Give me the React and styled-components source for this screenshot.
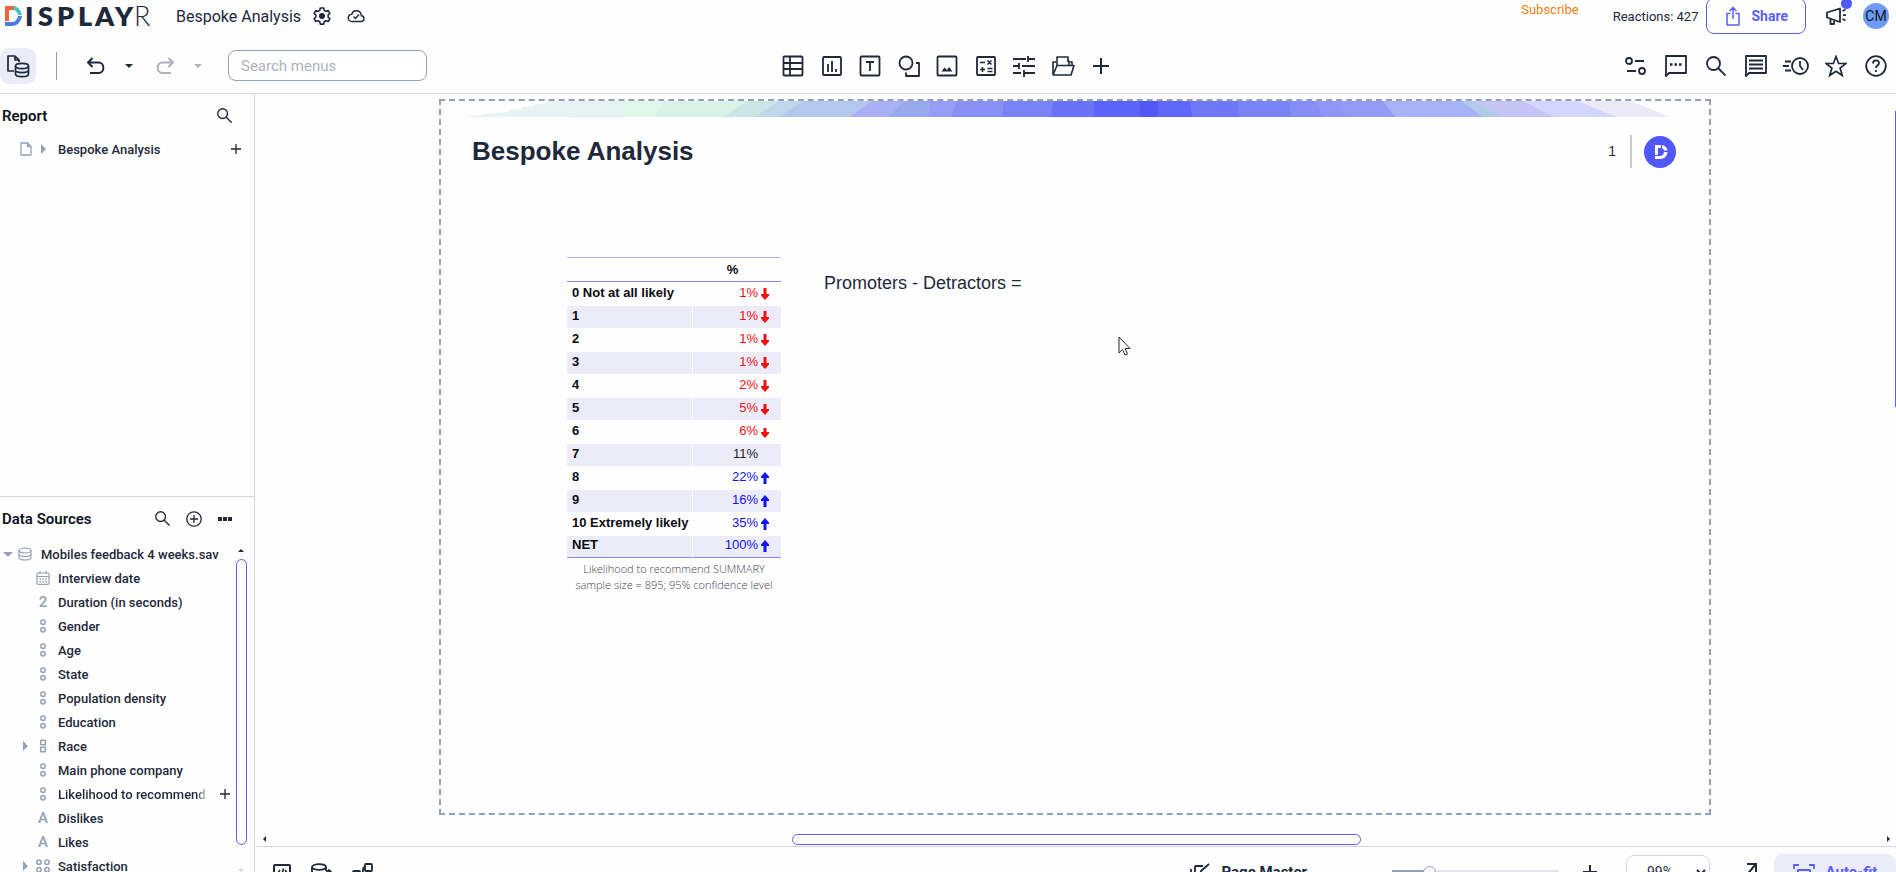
import React from 'react';
import styled, { createGlobalStyle, css } from 'styled-components';

const ink = '#1e293b';
const slate = '#94a0b8';
const line = '#d3d7e2';
const violet = '#5a5ff5';
const lilac = '#ecebf8';
const uiFont = 'Roboto, "Open Sans", sans-serif';
const slideFont = '"Liberation Sans", Arial, sans-serif';

const GlobalStyle = createGlobalStyle`
  * { box-sizing: border-box; }
  body {
    margin: 0;
    overflow: hidden;
    background: #fefefe;
    color: ${ink};
    font-family: ${uiFont};
    font-size: 13px;
  }
  button, input, select { font: inherit; color: inherit; }
`;

const Svg = styled.svg`
  display: block;
  flex: none;
  fill: none;
  stroke: currentColor;
  stroke-width: ${props => props.$stroke ?? 1.8};
  stroke-linejoin: round;
`;

const Icon = ({ size = 22, height, stroke, children }) => (
  <Svg
    width={size}
    height={height || size}
    viewBox={`0 0 ${size} ${height || size}`}
    $stroke={stroke}
    aria-hidden="true"
  >
    {children}
  </Svg>
);

const TableIcon = () => (
  <Icon>
    <rect x="1.500" y="1.500" width="19" height="19" rx="1" />
    <path d="M8 2v18M2 8h18M2 14h18" />
  </Icon>);

const ChartIcon = () => (
  <Icon>
    <rect x="2" y="2" width="18" height="18" rx="1" />
    <path d="M7 9v8M11 6v11M15 14v3" />
  </Icon>);

const TextIcon = () => (
  <Icon>
    <rect x="1.500" y="1.500" width="19" height="19" rx="1" />
    <path d="M7 7h8M11 7v9" />
  </Icon>);

const ShapesIcon = () => (
  <Icon>
    <circle cx="8" cy="8" r="6.500" />
    <path d="M18 8h3v13H8v-3.500" />
  </Icon>);

const ImageIcon = () => (
  <Icon>
    <rect x="1.500" y="1.500" width="19" height="19" rx="1" />
    <path d="M5.500 16.500l3-4 2.500 2.500 2-3 3.500 4.500z" fill="currentColor" stroke="none" />
  </Icon>);

const CalculatorIcon = () => (
  <Icon>
    <rect x="2" y="2" width="18" height="18" rx="1" />
    <path
      d="M5 7.500h5M12.500 5.500l4 4M16.500 5.500l-4 4M5 14.500h5M7.500 12v5M12.500 13.500h5M12.500 16.500h5"
      strokeWidth="1.500"
    />
  </Icon>);

const SlidersIcon = () => (
  <Icon>
    <path d="M0 4h13M15 1v6M15 4h7M0 11h6M6 8v6M9 11h13M0 18h8M11 15v7M11 18h11" />
  </Icon>);

const FolderIcon = () => (
  <Icon size={24} height={22} stroke={1.6}>
    <path d="M2 19V7h3M6 11V2h11v5M17 7l1-1v5M21 10V7h-2" />
    <path d="M2 20l4-9.500h17L20 20z" />
  </Icon>);

const PlusIcon = ({ size = 16, stroke = 2 }) => (
  <Icon size={size} stroke={stroke}>
    <path d={`M${size / 2} 0v${size}M0 ${size / 2}h${size}`} />
  </Icon>);

const TogglesIcon = () => (
  <Icon>
    <circle cx="4" cy="6" r="3" />
    <path d="M10 6h9M2 16h9" />
    <circle cx="17" cy="16" r="3" />
  </Icon>);

const CommentDotsIcon = () => (
  <Icon>
    <path d="M1 21V1h20v17H4z" />
    <path d="M5 9.500h2.500M9.500 9.500H12M14 9.500h2.500" strokeWidth="2.500" />
  </Icon>);

const CommentLinesIcon = () => (
  <Icon>
    <path d="M1 21V1h20v17H4z" />
    <path d="M4 5.500h14M4 9.500h14M4 13.500h14" />
  </Icon>);

const SearchIcon = ({ size = 20, stroke = 1.8 }) => (
  <Svg width={size} height={size} viewBox="0 0 20 20" $stroke={stroke} aria-hidden="true">
    <circle cx="7.500" cy="7.500" r="6.500" />
    <path d="M12 12l7.500 7.500" />
  </Svg>);

const HistoryIcon = () => (
  <Icon size={26} height={22}>
    <circle cx="17" cy="11" r="8" />
    <path d="M17 6v5l3 4M2 6.500h6M0 11h6M2 15.500h6" />
  </Icon>);

const StarIcon = () => (
  <Icon stroke={1.7}>
    <path d="M11 1.500l2.600 7H21l-5.900 4.600 2.200 7.400L11 16.200l-6.300 4.300 2.200-7.400L1 8.500h7.400z" strokeLinejoin="miter" />
  </Icon>);

const HelpIcon = () => (
  <Icon>
    <circle cx="11" cy="11" r="9.800" />
    <path d="M8 8.500c0-4 6-4 6-.5 0 2.500-3 2.500-3 5M11 15v2" />
  </Icon>);

const ReportDataIcon = () => (
  <Icon size={24} stroke={1.7}>
    <path d="M8 17H2V2h7l4 4v2M9 2v4h4" />
    <ellipse cx="16" cy="12" rx="6.500" ry="2.600" />
    <path d="M9.500 12v8c0 3.600 13 3.600 13 0v-8M9.500 16c0 3.400 13 3.400 13 0" />
  </Icon>);

const UndoIcon = () => (
  <Icon size={20} height={18} stroke={2}>
    <path d="M6.500 1L2 5.500 6.500 10M2 5.500h10.500c6.500 0 6.500 10.500 0 10.500H4" />
  </Icon>);

const RedoIcon = () => (
  <Icon size={20} height={18} stroke={2}>
    <path d="M13.500 1L18 5.500 13.500 10M18 5.500H7.500C1 5.500 1 16 7.500 16H16" />
  </Icon>);

const GearIcon = () => (
  <Icon size={18} stroke={1.6}>
    <path d="M7.300 1h3.400l.5 2.400 1.700 1 2.300-.8 1.700 2.900-1.800 1.600v1.900l1.800 1.600-1.700 2.900-2.300-.8-1.700 1-.5 2.400H7.300l-.5-2.400-1.700-1-2.300.8-1.700-2.900L2.900 10V8.100L1.100 6.500l1.700-2.900 2.300.8 1.700-1z" />
    <circle cx="9" cy="9" r="2.200" fill="currentColor" />
  </Icon>);

const CloudIcon = () => (
  <Icon size={18} height={14} stroke={1.4}>
    <path d="M5 12.500h9c4 0 4-5.300.3-5.700C14 .5 6 .2 4.800 5.400.2 5.200-.2 12.500 5 12.500zM6.500 7.500l2 2 3.500-4" />
  </Icon>);

const ShareIcon = () => (
  <Icon size={14} height={20} stroke={1.5}>
    <path d="M4.500 7.500H1V19h12V7.500H9.500M7 13V1.500M3.500 5L7 1.500 10.500 5" />
  </Icon>);

const MegaphoneIcon = () => (
  <Icon size={20} height={18}>
    <path d="M1 5.500v5L14 15V1.500zM4.500 11.500V17H8v-4.500" />
    <path d="M16.500 4l3-1.500M17 8.200h3M16.500 12l3 1.500" />
  </Icon>);

const DocIcon = () => (
  <Icon size={12} height={14} stroke={1.3}>
    <path d="M1 1h6.500L11 4.500V13H1zM7.500 1v3.500H11" />
  </Icon>);

const DatabaseIcon = () => (
  <Icon size={14} stroke={1.2}>
    <ellipse cx="7" cy="3.500" rx="6" ry="2.500" />
    <path d="M1 3.500v7c0 3.300 12 3.300 12 0v-7M1 7c0 3.300 12 3.300 12 0" />
  </Icon>);

const CalendarIcon = () => (
  <Icon size={14} stroke={1.2}>
    <rect x="1" y="2" width="12" height="11.300" rx="1" />
    <path d="M1 5.500h12M4 0v3M10 0v3" />
    <path d="M3.500 8h7.500M3.500 10.800h7.500" strokeDasharray="1.500 1.300" strokeWidth="1.500" />
  </Icon>);

const SingleIcon = () => (
  <Icon size={14} stroke={1.5}>
    <circle cx="7" cy="3.300" r="2.200" />
    <circle cx="7" cy="10.700" r="2.200" />
  </Icon>);

const MultiIcon = () => (
  <Icon size={14} stroke={1.5}>
    <rect x="4.700" y="1.200" width="4.600" height="4.600" />
    <rect x="4.700" y="8.200" width="4.600" height="4.600" />
  </Icon>);

const GridIcon = () => (
  <Icon size={14} stroke={1.5}>
    <circle cx="3" cy="3.300" r="2.200" />
    <circle cx="11" cy="3.300" r="2.200" />
    <circle cx="3" cy="10.700" r="2.200" />
    <circle cx="11" cy="10.700" r="2.200" />
  </Icon>);

const AddCircleIcon = () => (
  <Icon size={16} stroke={1.3}>
    <circle cx="8" cy="8" r="7.200" />
    <path d="M8 4v8M4 8h8" />
  </Icon>);

const MoreIcon = () => (
  <Icon size={14} height={4} stroke={0}>
    <path d="M0 0h4v4H0zM5 0h4v4H5zM10 0h4v4h-4z" fill="currentColor" />
  </Icon>);

const CodeIcon = () => (
  <Icon size={20} height={18} stroke={2}>
    <rect x="2" y="2" width="16" height="15" rx="1" />
    <path d="M8 7l-2 3 2 3M13 7l2 3-2 3M11.500 5.500l-2 7" strokeWidth="1.600" />
  </Icon>);

const DataOutIcon = () => (
  <Icon size={22} height={18}>
    <ellipse cx="8" cy="4" rx="7" ry="2.800" />
    <path d="M1 4v11c0 3 14 3 14 0M15 4v4M18 16V7M15 10l3-3 3 3" />
  </Icon>);

const NodesIcon = () => (
  <Icon size={22} height={18}>
    <rect x="13" y="1" width="7" height="7" rx="1" />
    <rect x="1" y="8" width="7" height="7" rx="1" />
    <path d="M8 12c5 0 1-8 5-8" />
  </Icon>);

const MasterIcon = () => (
  <Icon size={22} height={18}>
    <path d="M1 6v10M5 3v13h12V9M5 3h8M10 12l1-4 8-7" />
  </Icon>);

const ExpandIcon = () => (
  <Icon size={14} height={20} stroke={2}>
    <path d="M2 2h9v9M10 3L1 14" strokeLinejoin="miter" />
  </Icon>);

const FitIcon = () => (
  <Icon size={22} height={18}>
    <path d="M1 6V2h5M16 2h5v4M1 13v4h5M16 17h5v-4" />
    <rect x="5" y="7" width="12" height="6" />
  </Icon>);

const Triangle = styled.span`
  flex: none;
  width: 0;
  height: 0;
  border: ${props => props.$size || 5}px solid transparent;
  ${props => props.$dir === 'right' && css`
    border-right: 0;
    border-left-color: ${props.$color || slate};
  `}
  ${props => props.$dir === 'left' && css`
    border-left: 0;
    border-right-color: ${props.$color || ink};
  `}
  ${props => props.$dir === 'down' && css`
    border-bottom: 0;
    border-top-color: ${props.$color || slate};
  `}
  ${props => props.$dir === 'up' && css`
    border-top: 0;
    border-bottom-color: ${props.$color || ink};
  `}
`;

const App = styled.div`
  display: flex;
  flex-direction: column;
  height: 100vh;
  overflow: hidden;
`;

const Header = styled.header`
  flex: none;
  border-bottom: 1px solid ${line};
`;

const TitleBar = styled.div`
  display: flex;
  align-items: center;
  height: 32px;
  padding: 0 7px 0 4px;
`;

const DocTitle = styled.span`
  margin: 0 12px 0 20px;
  font-size: 16px;
`;

const PlainButton = styled.button`
  display: flex;
  align-items: center;
  justify-content: center;
  padding: 0;
  border: 0;
  background: none;
`;

const GearButton = styled(PlainButton)`
  margin-right: 16px;
`;

const Subscribe = styled.a`
  align-self: flex-start;
  margin: 2px 34px 0 auto;
  color: #ee7f10;
  font-size: 13px;
  text-decoration: none;
`;

const Reactions = styled.span`
  margin-right: 8px;
  font-size: 13px;
`;

const ShareButton = styled.button`
  display: flex;
  align-items: center;
  gap: 11px;
  height: 36px;
  margin-right: 20px;
  padding: 0 17px 0 19px;
  border: 1px solid ${violet};
  border-radius: 8px;
  background: #fff;
  color: ${violet};
  font-size: 14px;
  font-weight: 700;
`;

const NewsButton = styled(PlainButton)`
  position: relative;
  margin-right: 17px;
`;

const Badge = styled.span`
  position: absolute;
  top: -9px;
  right: -6px;
  width: 11px;
  height: 11px;
  border-radius: 50%;
  background: #5058f8;
`;

const Avatar = styled.button`
  width: 26px;
  height: 26px;
  padding: 0;
  border: 0;
  border-radius: 50%;
  background: #6d9bf6;
  color: #111827;
  font-size: 14px;
`;

const Toolbar = styled.div`
  display: grid;
  grid-template-columns: 1fr auto 1fr;
  align-items: center;
  height: 61px;
  padding-top: 6px;
`;

const LeftTools = styled.div`
  display: flex;
  align-items: center;
`;

const InsertTools = styled.div`
  display: flex;
  justify-content: space-between;
  width: 342px;
  margin-right: 2px;
`;

const ViewTools = styled.div`
  display: flex;
  justify-content: flex-end;
`;

const ToolButton = styled(PlainButton)`
  width: ${props => props.$width || 34}px;
  height: 36px;
  border-radius: 9px;
  background: ${props => (props.$active ? lilac : 'none')};
  color: ${props => (props.disabled ? '#aeb2bb' : ink)};
`;

const Divider = styled.span`
  width: 1px;
  height: 28px;
  margin: 0 20px;
  background: ${slate};
`;

const MenuSearch = styled.input`
  width: 199px;
  height: 31px;
  margin-left: 19px;
  padding: 0 12px;
  border: 1px solid ${slate};
  border-radius: 8px;
  background: #fff;
  font-size: 15px;
  outline: 0;
  &::placeholder { color: #aeb2bb; opacity: 1; }
`;

const Body = styled.div`
  display: flex;
  flex: 1;
  min-height: 0;
`;

const Sidebar = styled.aside`
  display: flex;
  flex-direction: column;
  flex: none;
  width: 255px;
  border-right: 1px solid ${line};
`;

const ReportPanel = styled.section`
  flex: 1;
  border-bottom: 1px solid ${line};
`;

const DataPanel = styled.section`
  display: flex;
  flex-direction: column;
  height: 375px;
  overflow: hidden;
`;

const PanelHeader = styled.div`
  display: flex;
  flex: none;
  align-items: center;
  gap: 16px;
  height: 43px;
  padding: 0 22px 0 2px;
`;

const PanelTitle = styled.h2`
  flex: 1;
  margin: 0;
  color: #0c1220;
  font-size: 15px;
  font-weight: 600;
`;

const Row = styled.div`
  display: flex;
  align-items: center;
  height: 24px;
  padding-left: ${props => props.$indent}px;
  padding-right: 3px;
  font-size: 13px;
  font-weight: 500;
  white-space: nowrap;
`;

const Glyph = styled.span`
  display: flex;
  align-items: center;
  justify-content: center;
  flex: none;
  width: 14px;
  margin-right: ${props => props.$gap || 8}px;
  color: ${slate};
  font-size: 15px;
`;

const AddPageButton = styled(PlainButton)`
  margin-right: 10px;
`;

const Twisty = styled.span`
  display: flex;
  flex: none;
  width: ${props => props.$width || 13}px;
`;

const RowLabel = styled.span`
  flex: 1;
  overflow: hidden;
  ${props => props.$fade && css`
    flex: 0 0 151px;
    margin-right: 11px;
    mask-image: linear-gradient(to right, #000 138px, transparent);
  `}
`;

const TreeArea = styled.div`
  display: flex;
  flex: 1;
  min-height: 0;
`;

const Tree = styled.div`
  width: 234px;
  padding-top: 2px;
`;

const VerticalScroll = styled.div`
  display: flex;
  flex-direction: column;
  align-items: center;
  width: 14px;
  padding-top: 9px;
`;

const VerticalThumb = styled.div`
  flex: none;
  width: 11px;
  height: 286px;
  margin: 7px 0 auto;
  border: 1px solid ${violet};
  border-radius: 6px;
`;

const Main = styled.main`
  display: flex;
  flex: 1;
  flex-direction: column;
  min-width: 0;
`;

const Workspace = styled.div`
  display: flex;
  flex: 1;
  min-height: 0;
`;

const Canvas = styled.div`
  flex: 1;
  min-height: 0;
  overflow: hidden;
  padding: 5px 184px 0;
`;

const PageThumb = styled.div`
  flex: none;
  width: 1px;
  height: 296px;
  margin-top: 17px;
  background: ${violet};
`;

const Slide = styled.article`
  position: relative;
  aspect-ratio: 16 / 9;
  border: 2px dashed ${slate};
  font-family: ${slideFont};
`;

const BannerSvg = styled.svg`
  display: block;
  width: 100%;
  height: 16px;
`;

// [colour, top edge, bottom edge], outermost band first
const bannerLeft = [
  ['#e0f7ec', 181, 181],
  ['#d9f2e7', 222, 214],
  ['#cbe4e6', 306, 283],
  ['#c0d6ea', 338, 314],
  ['#b4c8ee', 362, 338],
  ['#a9b0f6', 430, 409],
  ['#98aaee', 463, 448],
  ['#979df6', 489, 488],
  ['#8990f6', 516, 510],
  ['#7a82f8', 563, 561],
  ['#6a73f8', 612, 610],
  ['#5b63f8', 653, 653],
];
const bannerRight = [
  ['#eceaf7', 1190, 1229],
  ['#d3d5fc', 1136, 1176],
  ['#c4c5f6', 1082, 1112],
  ['#b0cbe8', 1032, 1061],
  ['#a8b2f6', 1020, 1042],
  ['#929af6', 942, 954],
  ['#8f96f6', 898, 906],
  ['#878ef6', 875, 882],
  ['#7a82f8', 848, 850],
  ['#6f77f6', 796, 798],
  ['#5f67f8', 749, 751],
  ['#5058f8', 717, 717],
];

const Banner = () => (
  <BannerSvg viewBox="0 0 1268 16" preserveAspectRatio="none" aria-hidden="true">
    <path d="M26 16v-1l18-1v-1l24-2V9l12-1V6l14-1V3l12-1V0h594v16z" fill="#e6f3f3" />
    <path d="M120 16l30-1h130v1z" fill="#dde3fa" />
    {bannerLeft.map(([fill, top, bottom]) => (
      <polygon key={fill} fill={fill} points={`${top},0 700,0 700,16 ${bottom},16`} />
    ))}
    {bannerRight.map(([fill, top, bottom]) => (
      <polygon key={fill} fill={fill} points={`699,0 ${top},0 ${bottom},16 699,16`} />
    ))}
  </BannerSvg>);

const SlideHeader = styled.div`
  display: flex;
  align-items: center;
  height: 69px;
  padding: 0 33px 0 31px;
`;

const SlideTitle = styled.h1`
  flex: 1;
  margin: 0;
  font-size: 26px;
  font-weight: 700;
`;

const PageNumber = styled.span`
  padding: 8px 14px 8px 0;
  border-right: 2px solid #c6cad6;
  font-size: 14px;
  line-height: 17px;
`;

const SlideLogo = styled.svg`
  margin-left: 12px;
`;

const SlideBody = styled.div`
  display: flex;
  align-items: flex-start;
  gap: 43px;
  padding: 71px 0 0 126px;
`;

const Results = styled.table`
  width: 214px;
  border-collapse: collapse;
  font-size: 13px;
  line-height: 16px;
  caption {
    caption-side: bottom;
    padding-top: 3px;
    color: #3f4454;
    font-family: "Open Sans", "Noto Sans", sans-serif;
    font-size: 11px;
    font-weight: 300;
    line-height: 16px;
    white-space: nowrap;
  }
  thead th {
    height: 24px;
    padding: 0 8px 0 0;
    border-top: 1px solid #b3b6ec;
    border-bottom: 1px solid #8488e6;
    color: #0b0b12;
    text-align: center;
  }
  tbody th {
    width: 125px;
    padding: 0 0 2px 5px;
    border-right: 1px solid #fff;
    color: #0b0b12;
    text-align: left;
    white-space: nowrap;
  }
  tbody tr { height: 24px; }
  tbody tr:nth-child(even) {
    height: 22px;
    background: ${lilac};
  }
  tbody tr:last-child { border-bottom: 1px solid #8488e6; }
  td { padding: 0 12px 2px 0; }
`;

const Value = styled.span`
  display: flex;
  align-items: center;
  justify-content: flex-end;
  gap: 3px;
  color: ${props => ({ down: '#f01010', up: '#1414f0' }[props.$trend] || '#1c1c24')};
`;

const Arrow = ({ trend, size = 12 }) => (
  <Icon size={8} height={14} stroke={0}>
    {trend === 'down' &&
      <path d={`M2.500 ${14 - size}h3V8H8v1.500L4 14 0 9.500V8h2.500z`} fill="currentColor" />}
    {trend === 'up' &&
      <path d="M2.500 14h3V8H8V6.500L4 2 0 6.500V8h2.500z" fill="currentColor" />}
  </Icon>);

const Formula = styled.p`
  margin: 15px 0 0;
  font-size: 18px;
  line-height: 22px;
`;

const Pointer = styled.svg`
  position: absolute;
  top: 33%;
  left: 53.4%;
`;

const HorizontalScroll = styled.div`
  display: flex;
  align-items: center;
  flex: none;
  height: 14px;
  padding: 0 6px 0 8px;
`;

const HorizontalThumb = styled.div`
  width: 35%;
  height: 11px;
  margin: 0 auto;
  border: 1px solid ${violet};
  border-radius: 6px;
`;

const Footer = styled.footer`
  flex: none;
  height: 26px;
  margin-left: 1px;
  border-top: 1px solid ${line};
  overflow: hidden;
`;

const FooterTools = styled.div`
  display: flex;
  align-items: center;
  height: 50px;
  padding-left: 16px;
`;

const FooterIcons = styled.div`
  display: flex;
  flex: 1;
  gap: 19px;
`;

const MasterButton = styled(PlainButton)`
  gap: 9px;
  margin-right: 85px;
  font-size: 15px;
  font-weight: 700;
`;

const ZoomSlider = styled.input`
  width: 167px;
  height: 14px;
  margin: 0 24px 0 0;
  appearance: none;
  background: linear-gradient(${slate}, ${slate}) 0 50% / 34px 4px no-repeat,
    linear-gradient(#e4e5ea, #e4e5ea) 0 50% / 100% 4px no-repeat;
  &::-webkit-slider-thumb {
    appearance: none;
    width: 13px;
    height: 13px;
    border: 1px solid ${slate};
    border-radius: 50%;
    background: #fff;
  }
`;

const ZoomSelect = styled.select`
  width: 84px;
  height: 34px;
  margin: 0 35px 0 29px;
  padding: 0 16px;
  border: 1px solid ${line};
  border-radius: 8px;
  background: #fff;
  font-size: 14px;
`;

const FitButton = styled(PlainButton)`
  gap: 11px;
  width: 122px;
  height: 36px;
  margin-left: 15px;
  border-radius: 9px;
  background: ${lilac};
  color: ${violet};
  font-size: 15px;
  font-weight: 700;
`;

const Logo = () => (
  <svg width="152" height="32" viewBox="0 0 152 32" role="img" aria-label="Displayr">
    <path d="M1 6h9v4H5v11H1z" fill="#f0633f" />
    <path d="M10 6c4 1 7 4 8 9h-4c-1-3-2-4-4-5z" fill="#3cc8c8" />
    <path d="M18 16c-1 6-5 10-10 10H1v-4h7c3 0 5-2 6-6z" fill="#4a7de0" />
    <g fill={ink} fontFamily="Lato, sans-serif" fontSize="27" fontWeight="800">
      <text x="21" y="26">I</text>
      <text x="34" y="26">S</text>
      <text x="53" y="26">P</text>
      <text x="74" y="26">L</text>
      <text x="91" y="26">A</text>
      <text x="111" y="26">Y</text>
      <text x="130" y="26" fontWeight="300">R</text>
    </g>
  </svg>);

const insertTools = [
  ['Table', TableIcon],
  ['Visualization', ChartIcon],
  ['Text box', TextIcon],
  ['Shape', ShapesIcon],
  ['Image', ImageIcon],
  ['Calculation', CalculatorIcon],
  ['Control', SlidersIcon],
  ['Library', FolderIcon],
  ['More', PlusIcon],
];

const viewTools = [
  ['Properties', TogglesIcon],
  ['Chat', CommentDotsIcon],
  ['Search', SearchIcon],
  ['Comments', CommentLinesIcon],
  ['History', HistoryIcon],
  ['Favorites', StarIcon],
  ['Help', HelpIcon],
];

const variables = [
  { label: 'Interview date', glyph: <CalendarIcon /> },
  { label: 'Duration (in seconds)', glyph: '2' },
  { label: 'Gender', glyph: <SingleIcon /> },
  { label: 'Age', glyph: <SingleIcon /> },
  { label: 'State', glyph: <SingleIcon /> },
  { label: 'Population density', glyph: <SingleIcon /> },
  { label: 'Education', glyph: <SingleIcon /> },
  { label: 'Race', glyph: <MultiIcon />, nested: true },
  { label: 'Main phone company', glyph: <SingleIcon /> },
  { label: 'Likelihood to recommend', glyph: <SingleIcon />, hovered: true },
  { label: 'Dislikes', glyph: 'A' },
  { label: 'Likes', glyph: 'A' },
  { label: 'Satisfaction', glyph: <GridIcon />, nested: true },
];

const results = [
  ['0 Not at all likely', '1%', 'down'],
  ['1', '1%', 'down'],
  ['2', '1%', 'down'],
  ['3', '1%', 'down'],
  ['4', '2%', 'down'],
  ['5', '5%', 'down', 11],
  ['6', '6%', 'down', 10],
  ['7', '11%', ''],
  ['8', '22%', 'up'],
  ['9', '16%', 'up'],
  ['10 Extremely likely', '35%', 'up'],
  ['NET', '100%', 'up'],
];

const TopHeader = () => (
  <Header>
    <TitleBar>
      <Logo />
      <DocTitle>Bespoke Analysis</DocTitle>
      <GearButton aria-label="Document settings"><GearIcon /></GearButton>
      <CloudIcon />
      <Subscribe href="#subscribe">Subscribe</Subscribe>
      <Reactions>Reactions: 427</Reactions>
      <ShareButton><ShareIcon />Share</ShareButton>
      <NewsButton aria-label="News"><MegaphoneIcon /><Badge /></NewsButton>
      <Avatar>CM</Avatar>
    </TitleBar>
    <Toolbar>
      <LeftTools>
        <ToolButton $width={36} $active aria-label="Report and data"><ReportDataIcon /></ToolButton>
        <Divider />
        <ToolButton $width={38} aria-label="Undo"><UndoIcon /></ToolButton>
        <ToolButton $width={28} aria-label="Undo list"><Triangle $dir="down" $size={4} $color={ink} /></ToolButton>
        <ToolButton $width={44} disabled aria-label="Redo"><RedoIcon /></ToolButton>
        <ToolButton $width={22} disabled aria-label="Redo list"><Triangle $dir="down" $size={4} $color="#aeb2bb" /></ToolButton>
        <MenuSearch placeholder="Search menus" aria-label="Search menus" />
      </LeftTools>
      <InsertTools>
        {insertTools.map(([label, ToolIcon]) => (
          <ToolButton key={label} aria-label={label}><ToolIcon /></ToolButton>
        ))}
      </InsertTools>
      <ViewTools>
        {viewTools.map(([label, ToolIcon]) => (
          <ToolButton key={label} $width={40} aria-label={label}><ToolIcon /></ToolButton>
        ))}
      </ViewTools>
    </Toolbar>
  </Header>);

const SidePanels = () => (
  <Sidebar>
    <ReportPanel>
      <PanelHeader>
        <PanelTitle>Report</PanelTitle>
        <PlainButton aria-label="Search report"><SearchIcon size={15} /></PlainButton>
      </PanelHeader>
      <Row $indent={19}>
        <Glyph><DocIcon /></Glyph>
        <Twisty $width={17}><Triangle $dir="right" /></Twisty>
        <RowLabel>Bespoke Analysis</RowLabel>
        <AddPageButton aria-label="Add page"><PlusIcon size={10} stroke={1.3} /></AddPageButton>
      </Row>
    </ReportPanel>
    <DataPanel>
      <PanelHeader>
        <PanelTitle>Data Sources</PanelTitle>
        <PlainButton aria-label="Search data"><SearchIcon size={15} /></PlainButton>
        <PlainButton aria-label="Add data source"><AddCircleIcon /></PlainButton>
        <PlainButton aria-label="More options"><MoreIcon /></PlainButton>
      </PanelHeader>
      <TreeArea>
        <Tree>
          <Row $indent={3}>
            <Twisty $width={15}><Triangle $dir="down" $size={5} /></Twisty>
            <Glyph $gap={9}><DatabaseIcon /></Glyph>
            <RowLabel>Mobiles feedback 4 weeks.sav</RowLabel>
          </Row>
          {variables.map(item => (
            <Row key={item.label} $indent={23}>
              <Twisty>{item.nested && <Triangle $dir="right" />}</Twisty>
              <Glyph>{item.glyph}</Glyph>
              <RowLabel $fade={item.hovered}>{item.label}</RowLabel>
              {item.hovered &&
                <PlainButton aria-label={`Add ${item.label}`}><PlusIcon size={10} stroke={1.3} /></PlainButton>}
            </Row>
          ))}
        </Tree>
        <VerticalScroll>
          <Triangle $dir="up" $size={3} />
          <VerticalThumb />
          <Triangle $dir="down" $size={3} $color={line} />
        </VerticalScroll>
      </TreeArea>
    </DataPanel>
  </Sidebar>);

const ReportSlide = () => (
  <Slide>
    <Banner />
    <SlideHeader>
      <SlideTitle>Bespoke Analysis</SlideTitle>
      <PageNumber>1</PageNumber>
      <SlideLogo width="32" height="32" viewBox="0 0 32 32" aria-hidden="true">
        <circle cx="16" cy="16" r="16" fill="#5058f8" />
        <path d="M11 9h6v3h-3v7h-3z" fill="#fff" />
        <path d="M18 9c3 .5 5 2.500 5.500 5.500H20c-.3-1.200-1-2-2-2.400z" fill="#fff" />
        <path d="M11 20h5c2.200 0 3.600-1.500 4-4h3.500c-.5 4.500-3.500 7-7.500 7h-5z" fill="#fff" />
      </SlideLogo>
    </SlideHeader>
    <SlideBody>
      <Results>
        <caption>
          Likelihood to recommend SUMMARY<br />
          sample size = 895; 95% confidence level
        </caption>
        <thead>
          <tr><th aria-label="Answer" /><th>%</th></tr>
        </thead>
        <tbody>
          {results.map(([label, value, trend, size]) => (
            <tr key={label}>
              <th scope="row">{label}</th>
              <td>
                <Value $trend={trend}>{value}<Arrow trend={trend} size={size} /></Value>
              </td>
            </tr>
          ))}
        </tbody>
      </Results>
      <Formula>Promoters - Detractors =</Formula>
    </SlideBody>
    <Pointer width="13" height="20" viewBox="0 0 13 20" aria-hidden="true">
      <path d="M1 1v16l3.500-3.500 2.500 5.500 2.500-1-2.500-5.500H12z" fill="#fff" stroke="#22263a" />
    </Pointer>
  </Slide>);

const BottomBar = () => (
  <Footer>
    <FooterTools>
      <FooterIcons>
        <PlainButton aria-label="Code"><CodeIcon /></PlainButton>
        <PlainButton aria-label="Update data"><DataOutIcon /></PlainButton>
        <PlainButton aria-label="Dependencies"><NodesIcon /></PlainButton>
      </FooterIcons>
      <MasterButton><MasterIcon />Page Master</MasterButton>
      <ZoomSlider type="range" min="0" max="100" defaultValue="20" aria-label="Zoom" />
      <PlainButton aria-label="Zoom in"><PlusIcon size={14} /></PlainButton>
      <ZoomSelect defaultValue="99%" aria-label="Zoom level">
        <option>99%</option>
      </ZoomSelect>
      <PlainButton aria-label="Full screen"><ExpandIcon /></PlainButton>
      <FitButton><FitIcon />Auto-fit</FitButton>
    </FooterTools>
  </Footer>);

const DisplayrApp = () => (
  <App>
    <GlobalStyle />
    <TopHeader />
    <Body>
      <SidePanels />
      <Main>
        <Workspace>
          <Canvas><ReportSlide /></Canvas>
          <PageThumb />
        </Workspace>
        <HorizontalScroll>
          <Triangle $dir="left" $size={3} />
          <HorizontalThumb />
          <Triangle $dir="right" $size={3} $color={ink} />
        </HorizontalScroll>
        <BottomBar />
      </Main>
    </Body>
  </App>);

export default DisplayrApp;
